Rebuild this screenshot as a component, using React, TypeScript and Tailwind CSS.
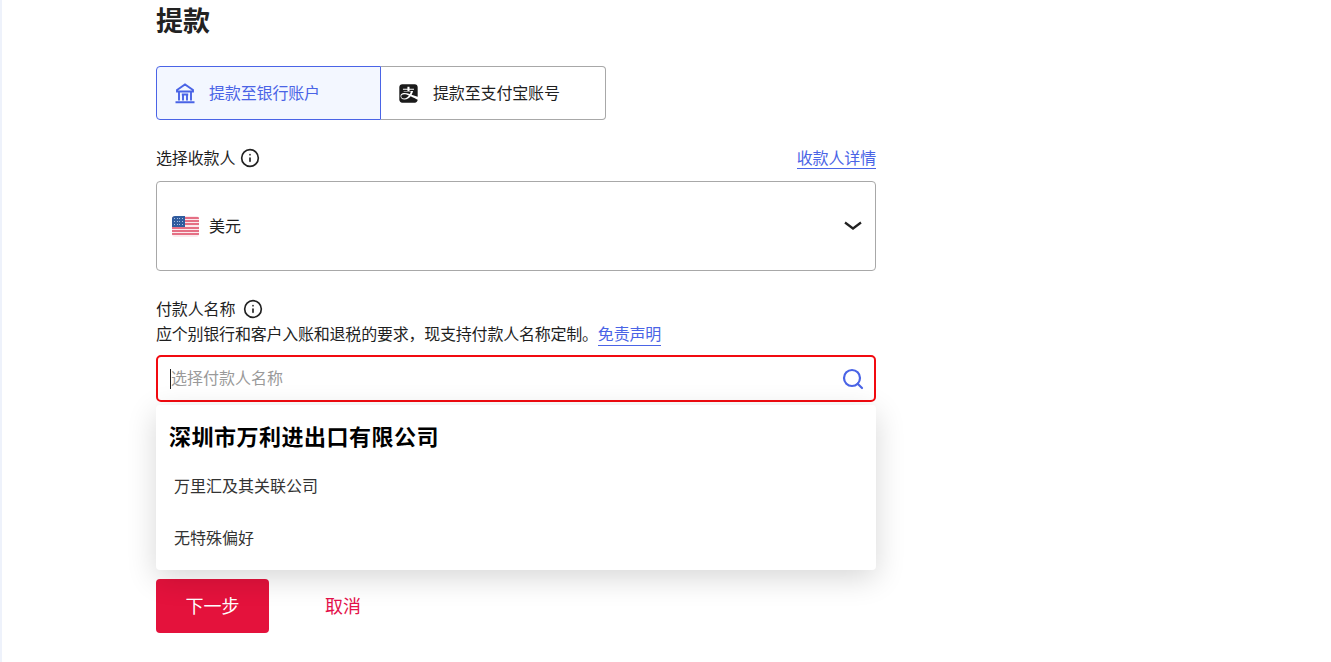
import { Info, Search } from 'lucide-react';
import { FaAlipay } from 'react-icons/fa';

const FONT = "font-['Noto_Sans_CJK_SC','Liberation_Sans',sans-serif]";

function BankIcon() {
    return (
        <svg width="20" height="21" viewBox="0 0 20 21" fill="none" stroke="#4a64e6" strokeWidth="1.900">
            <path d="M2 7L10 1.500 18 7v1.500H2z" />
            <path d="M4 8.500v9M16 8.500v9M8 11.500v6M12 11.500v6M6.800 11.500h6.400M.5 19.200h19" />
        </svg>
    );
}

function ChevronIcon() {
    return (
        <svg width="18" height="10" viewBox="0 0 18 10" fill="none" stroke="#222" strokeWidth="2.200">
            <path d="M1 1.500l8 6 8-6" />
        </svg>
    );
}

function UsFlag() {
    const stripes = [0, 1, 2, 3, 4, 5];
    const stars = Array.from({ length: 12 }, (_, i) => i);
    return (
        <span className="relative flex h-[21px] w-[27px] flex-col justify-between overflow-hidden rounded-[3px] bg-[#fbe9ec] py-[1px]">
            {stripes.map((s) => (
                <span key={s} className="h-[2px] w-full bg-[#e56f84]" />
            ))}
            <span className="absolute left-0 top-0 grid h-[11px] w-[13px] grid-cols-4 place-items-center bg-[#2f5c9e] p-[1px]">
                {stars.map((s) => (
                    <span key={s} className="h-px w-px bg-[#a9c0e4]" />
                ))}
            </span>
        </span>
    );
}

export default function App() {
    return (
        <div className={`${FONT} h-[662px] overflow-hidden border-l-2 border-[#eef2fb] bg-white pl-[154px] text-[#1f1f1f]`}>
            <div className="w-[720px]">
                <h1 className="h-[42px] text-[27px] font-bold leading-[39px] text-[#222]">提款</h1>

                <div className="mt-6 flex w-[450px] text-base">
                    <button className="flex h-[54px] w-[225px] items-center gap-[14px] rounded-l border border-[#4a64e6] bg-[#f3f7ff] pl-[18px] text-[#4a64e6]">
                        <BankIcon />
                        <span className="-mt-[2px] tracking-[-0.15px]">提款至银行账户</span>
                    </button>
                    <button className="flex h-[54px] w-[225px] items-center gap-[14px] rounded-r border border-l-0 border-[#a8a8a8] pl-[17px]">
                        <FaAlipay size={21} className="text-[#1a1a1a]" />
                        <span className="-mt-[2px] tracking-[-0.15px]">提款至支付宝账号</span>
                    </button>
                </div>

                <div className="mt-[26px] flex h-[25px] items-center justify-between text-base">
                    <span className="flex items-center gap-[5px]">
                        <span className="-mt-[3px] tracking-[-0.15px]">选择收款人</span>
                        <Info size={20} strokeWidth={2} className="-mt-px text-[#222]" />
                    </span>
                    <a className="-mt-[2px] border-b border-[#4a64e6] leading-[21px] tracking-[-0.15px] text-[#4a64e6]">收款人详情</a>
                </div>

                <div className="mt-[10px] flex h-[90px] items-center justify-between rounded border border-[#a8a8a8] pl-[15px] pr-[13px] text-base">
                    <span className="flex items-center gap-[10px]">
                        <UsFlag />
                        <span className="-mt-[3px]">美元</span>
                    </span>
                    <ChevronIcon />
                </div>

                <div className="mt-[26px] flex h-[24px] items-center gap-[8px] text-base">
                    <span className="-mt-[2px] tracking-[-0.15px]">付款人名称</span>
                    <Info size={20} strokeWidth={2} className="-mt-px text-[#222]" />
                </div>
                <p className="-mt-px h-[27px] text-base leading-[26px] tracking-[-0.22px]">
                    应个别银行和客户入账和退税的要求{'\uFF0C'}现支持付款人名称定制。
                    <a className="border-b border-[#4a64e6] text-[#4a64e6]">免责声明</a>
                </p>

                <div className="relative mt-[8px]">
                    <div className="flex h-[47px] items-center justify-between rounded-[5px] border-2 border-[#f20a10] pl-[12px] pr-[9px] text-base text-[#9a9a9a]">
                        <span className="border-l border-[#222] leading-[20px]">
                            <span className="relative -top-[2px]">选择付款人名称</span>
                        </span>
                        <Search size={24} strokeWidth={2.200} className="text-[#4a64e6]" />
                    </div>

                    <div className="absolute left-0 top-[50px] z-10 h-[165px] w-full rounded bg-white shadow-[0_8px_30px_rgba(0,0,0,0.16)]">
                        <div className="pl-[13px] pt-[14px] text-[22px] font-bold leading-[32px] tracking-[0.5px] text-black">深圳市万利进出口有限公司</div>
                        <div className="mt-[22px] pl-[18px] text-base leading-[24px] text-[#333]">万里汇及其关联公司</div>
                        <div className="mt-[28px] pl-[18px] text-base leading-[24px] text-[#333]">无特殊偏好</div>
                    </div>
                </div>

                <div className="mt-[177px] flex items-center text-lg">
                    <button className="h-[54px] w-[113px] rounded bg-[#e4123c] pb-[2px] text-white">下一步</button>
                    <button className="ml-[56px] pb-[2px] text-[#e4124a]">取消</button>
                </div>
            </div>
        </div>
    );
}
